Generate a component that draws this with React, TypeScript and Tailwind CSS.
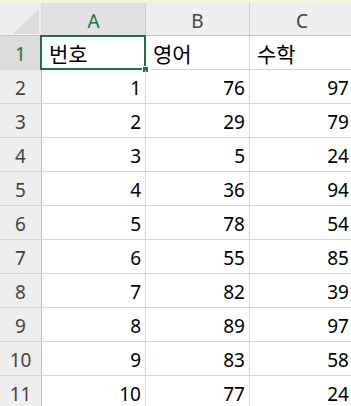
import React from 'react';

const ROWS = [
  { a: '번호', b: '영어', c: '수학', text: true },
  { a: '1', b: '76', c: '97' },
  { a: '2', b: '29', c: '79' },
  { a: '3', b: '5', c: '24' },
  { a: '4', b: '36', c: '94' },
  { a: '5', b: '78', c: '54' },
  { a: '6', b: '55', c: '85' },
  { a: '7', b: '82', c: '39' },
  { a: '8', b: '89', c: '97' },
  { a: '9', b: '83', c: '58' },
  { a: '10', b: '77', c: '24' },
];

const FONT = { fontFamily: '"Noto Sans", "Noto Sans CJK KR", sans-serif' };

function Cell({ value, text, selected }: { value: string; text?: boolean; selected?: boolean }) {
  return (
    <div
      className={
        'relative w-[104px] shrink-0 h-full border-r border-[#d6d6d6] flex items-center text-black ' +
        (text ? 'justify-start pl-[7px] pt-[4px] text-[21px]' : 'justify-end pr-[4px] pt-[3px] text-[19px]')
      }
    >
      {value}
      {selected && (
        <>
          <div className="absolute -left-[2px] -top-[1px] -right-[1px] -bottom-[1px] border-[2.5px] border-[#1e7145]" />
          <div className="absolute -right-[4px] -bottom-[4px] w-[7px] h-[7px] bg-[#1e7145] border border-white" />
        </>
      )}
    </div>
  );
}

export default function App() {
  return (
    <div className="w-[351px] h-[406px] overflow-hidden bg-white" style={FONT}>
      <div className="h-[3px] bg-[#f5f3e2]" />

      {/* column headers */}
      <div className="flex h-[33px] bg-[#efefef] border-b border-[#c6c6c6]">
        <div className="w-[42px] shrink-0 border-r border-[#d9d9d9] relative">
          <svg width="41" height="32" className="absolute left-0 top-0">
            <polygon points="13,31 39,31 39,6" fill="#dcdcdc" />
          </svg>
        </div>
        <div className="w-[104px] shrink-0 bg-[#e1e1e1] border-r border-[#d0d0d0] flex items-center justify-center pt-[4px] text-[19px] text-[#1e7145]">
          A
        </div>
        <div className="w-[104px] shrink-0 border-r border-[#d0d0d0] flex items-center justify-center pt-[4px] text-[19px] text-[#444]">
          B
        </div>
        <div className="w-[104px] shrink-0 flex items-center justify-center pt-[4px] text-[19px] text-[#444]">
          C
        </div>
      </div>

      {ROWS.map((row, i) => (
        <div key={i} className="flex h-[34px] border-b border-[#d6d6d6]">
          <div
            className={
              'w-[42px] shrink-0 h-full border-r border-[#bdbdbd] flex items-center justify-center pt-[3px] text-[19px] ' +
              (i === 0 ? 'bg-[#dcdcdc] text-[#1e7145]' : 'bg-[#efefef] text-[#444]')
            }
          >
            {i + 1}
          </div>
          <Cell value={row.a} text={row.text} selected={i === 0} />
          <Cell value={row.b} text={row.text} />
          <Cell value={row.c} text={row.text} />
        </div>
      ))}
    </div>
  );
}
